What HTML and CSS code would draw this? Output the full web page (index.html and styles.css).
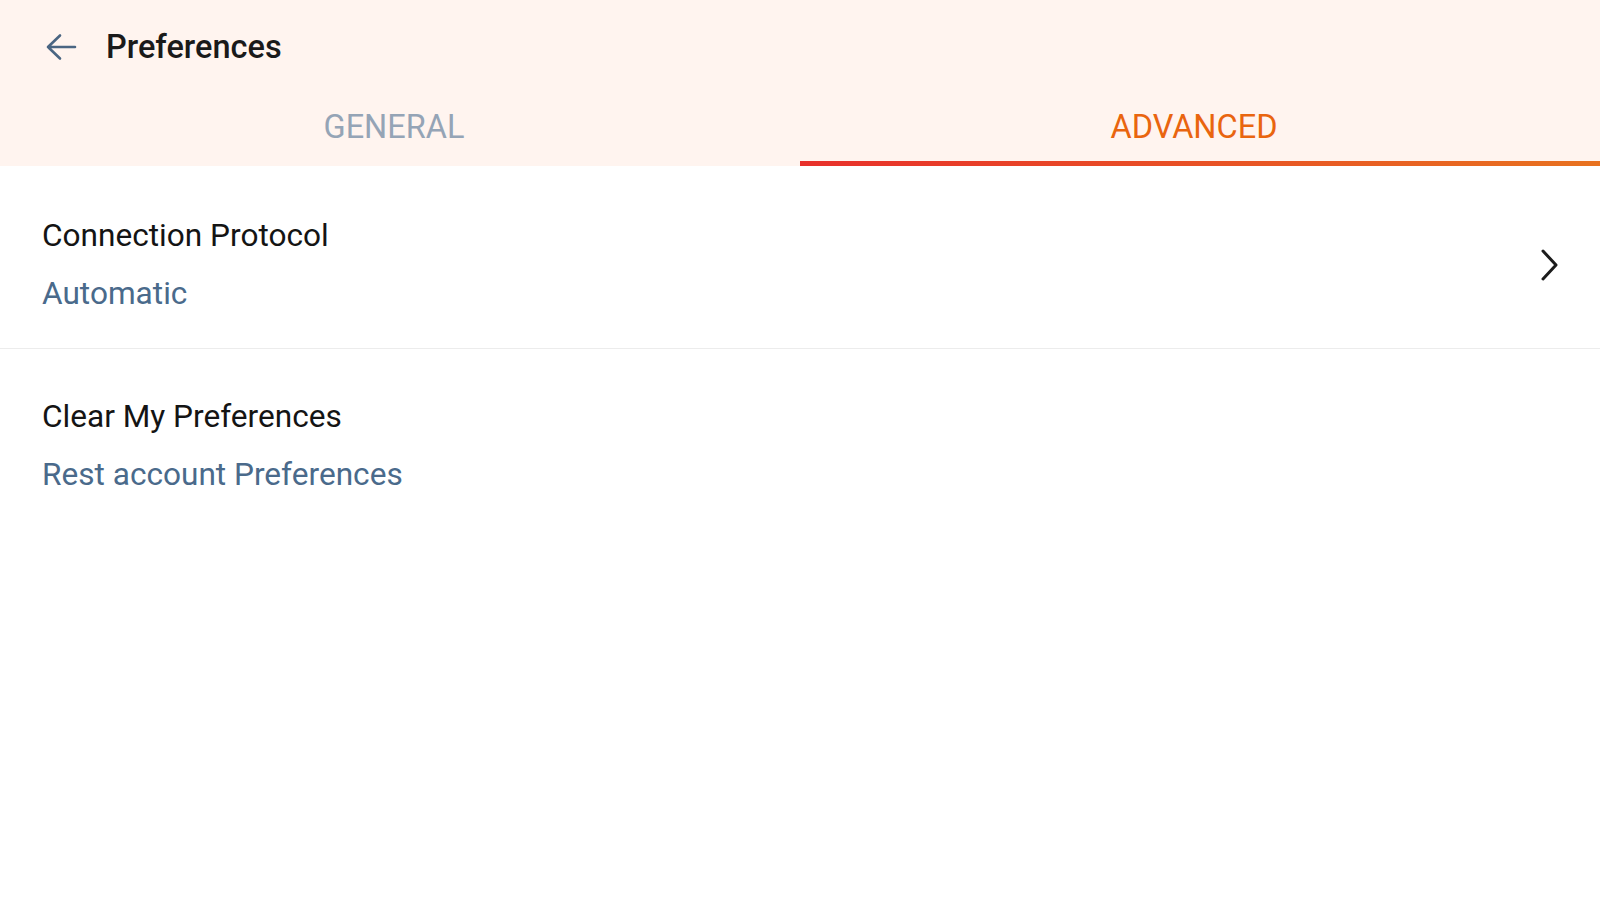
FILE: index.html
```html
<!DOCTYPE html>
<html lang="en">
<head>
<meta charset="utf-8">
<title>Preferences</title>
<link rel="stylesheet" href="styles.css">
</head>
<body>
<header class="appbar">
  <div class="toolbar">
    <button class="back" aria-label="Back">
      <svg width="32" height="32" viewBox="0 0 32 32" fill="none" stroke="currentColor" stroke-width="2.6" stroke-linecap="round" stroke-linejoin="round"><path d="M3 16H30M15 4.5L3 16L15 27.5"/></svg>
    </button>
    <h1 class="title">Preferences</h1>
  </div>
  <nav class="tabs">
    <div class="tab"><span class="tab-label">GENERAL</span></div>
    <div class="tab active"><span class="tab-label">ADVANCED</span><span class="indicator"></span></div>
  </nav>
</header>
<main class="list">
  <div class="row">
    <div class="row-text">
      <div class="row-title">Connection Protocol</div>
      <div class="row-sub">Automatic</div>
    </div>
    <svg class="chevron" width="32" height="32" viewBox="0 0 32 32" fill="none" stroke="currentColor" stroke-width="3" stroke-linecap="round" stroke-linejoin="round"><path d="M9 2L22 16L9 30"/></svg>
  </div>
  <div class="row">
    <div class="row-text">
      <div class="row-title">Clear My Preferences</div>
      <div class="row-sub">Rest account Preferences</div>
    </div>
  </div>
</main>
</body>
</html>
```
FILE: styles.css
```css
* { box-sizing: border-box; }
html, body {
  margin: 0;
  padding: 0;
  background: #ffffff;
  font-family: Roboto, "Noto Sans", "Liberation Sans", sans-serif;
}
.appbar {
  background: #fff4ef;
}
.toolbar {
  height: 96px;
  display: flex;
  align-items: center;
  padding-left: 45px;
}
.back {
  border: 0;
  background: none;
  padding: 0;
  width: 32px;
  height: 32px;
  color: #4a6582;
  display: flex;
  margin-top: -2px;
}
.title {
  margin: 0 0 0 29px;
  font-size: 32.5px;
  line-height: 40px;
  font-weight: 500;
  color: #1a1a1a;
  position: relative;
  top: -1px;
}
.tabs {
  display: grid;
  grid-template-columns: 1fr 1fr;
  height: 70px;
}
.tab {
  display: flex;
  flex-direction: column;
  align-items: center;
  padding-top: 12px;
}
.tab-label {
  font-size: 32.5px;
  line-height: 38px;
  color: #95a4b6;
  padding-right: 12px;
}
.tab.active .tab-label {
  color: #e9650f;
}
.indicator {
  margin-top: auto;
  align-self: stretch;
  height: 5px;
  background: linear-gradient(90deg, #e8302b 0%, #e8721f 100%);
}
.row {
  display: flex;
  align-items: center;
  padding: 50px 34px 34px 42px;
  border-bottom: 1px solid #ececec;
}
.row:last-child {
  border-bottom: 0;
  padding-top: 48px;
}
.row-text {
  flex: 1;
}
.row-title {
  font-size: 31.6px;
  line-height: 40px;
  color: #141414;
}
.row-sub {
  margin-top: 18px;
  font-size: 31.6px;
  line-height: 40px;
  color: #4a6a8b;
}
.chevron {
  color: #1c1c1c;
}
```
